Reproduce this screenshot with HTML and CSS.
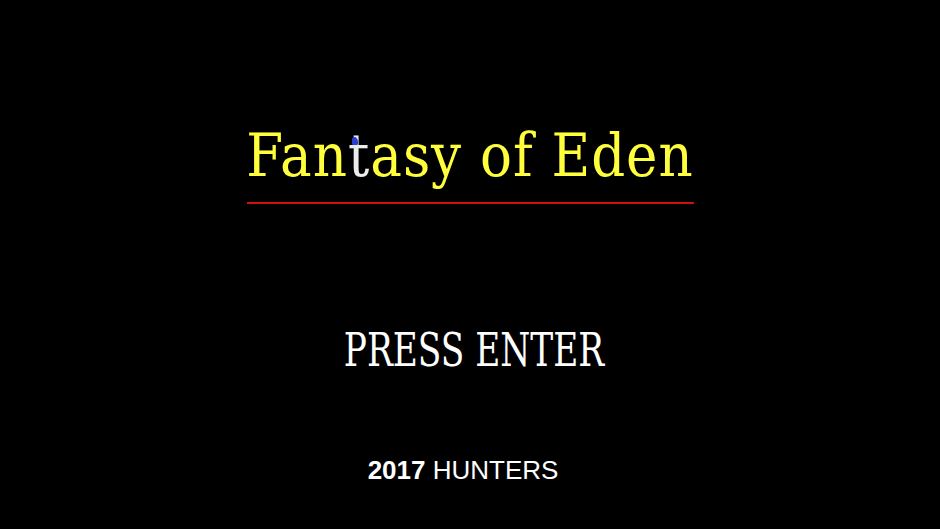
FILE: index.html
```html
<!DOCTYPE html>
<html>
<head>
<meta charset="utf-8">
<link rel="stylesheet" href="styles.css">
</head>
<body>
<main class="screen">
  <div class="title-block">
    <h1 class="title">Fan<span class="t-white">t</span>asy of Eden</h1>
    <div class="rule"></div>
  </div>
  <div class="press">PRESS ENTER</div>
  <div class="credit"><b>2017</b> HUNTERS</div>
</main>
</body>
</html>
```
FILE: styles.css
```css
html, body {
  margin: 0;
  padding: 0;
  background: #000;
  width: 940px;
  height: 529px;
  overflow: hidden;
}
.screen {
  display: flex;
  flex-direction: column;
  align-items: center;
  height: 529px;
}
.title-block {
  margin-top: 123px;
  display: flex;
  flex-direction: column;
  align-items: center;
}
.title {
  margin: 0;
  font-family: "DejaVu Serif Condensed", "DejaVu Serif", serif;
  font-weight: normal;
  font-size: 59px;
  line-height: 66px;
  color: #ffff3c;
  letter-spacing: 1px;
}
.t-white {
  color: #ececec;
  position: relative;
}
.t-white::before {
  content: "";
  position: absolute;
  left: 4px;
  top: 16px;
  width: 6px;
  height: 8px;
  background: #2a3fd0;
  border-radius: 40% 60% 20% 20%;
}
.rule {
  width: 447px;
  height: 2px;
  background: #d01010;
  margin-top: 13px;
}
.press {
  margin-top: 121px;
  padding-left: 10px;
  font-family: "DejaVu Serif Condensed", "DejaVu Serif", serif;
  font-size: 46px;
  line-height: 50px;
  color: #fff;
  transform: scaleX(0.83);
}
.credit {
  margin-top: 80px;
  padding-right: 14px;
  font-family: "Liberation Sans", Arial, sans-serif;
  font-size: 26px;
  color: #fff;
}
.credit b {
  font-weight: bold;
}
```
